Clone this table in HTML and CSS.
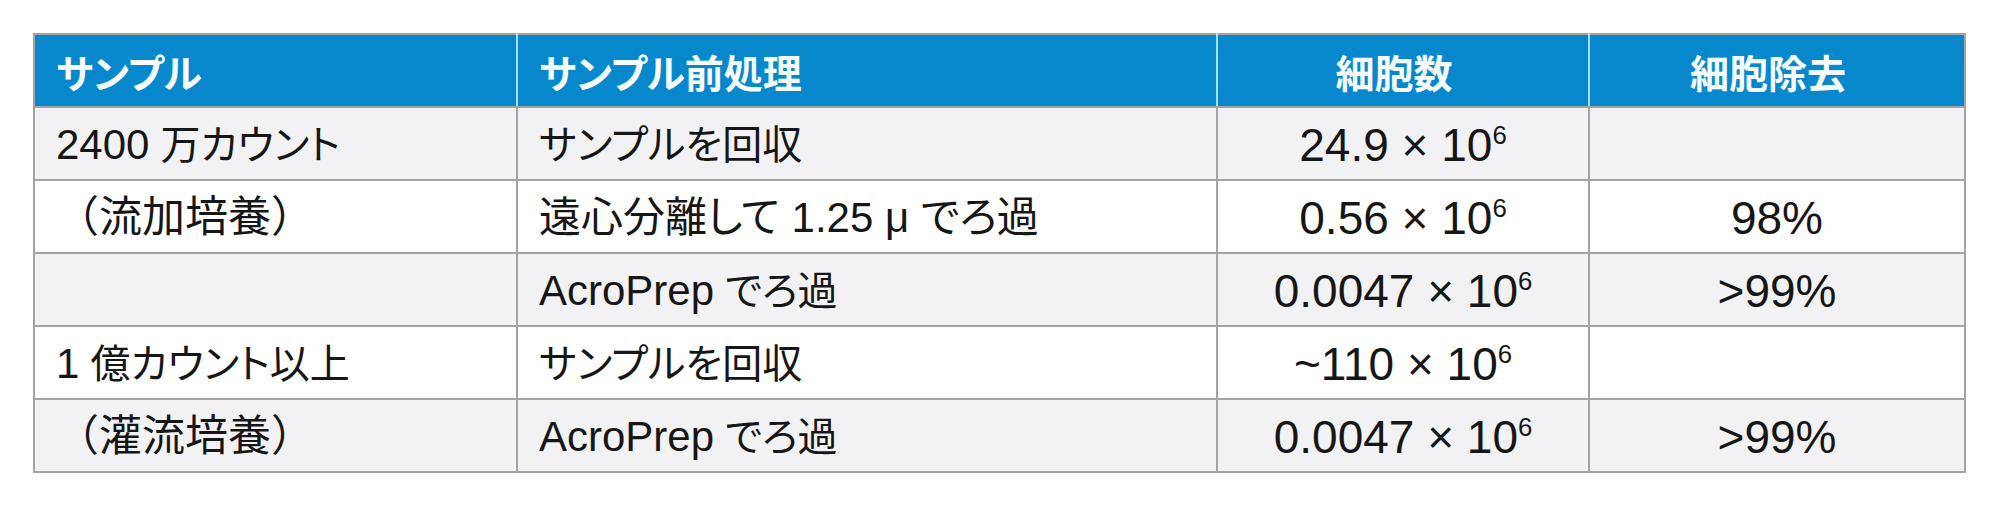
FILE: index.html
```html
<!DOCTYPE html>
<html lang="ja">
<head>
<meta charset="utf-8">
<title>細胞除去</title>
<link rel="stylesheet" href="styles.css">
</head>
<body>
<table class="t">
  <colgroup><col class="c1"><col class="c2"><col class="c3"><col class="c4"></colgroup>
  <thead>
    <tr>
      <th class="l first">サンプル</th>
      <th class="l">サンプル前処理</th>
      <th>細胞数</th>
      <th class="last">細胞除去</th>
    </tr>
  </thead>
  <tbody>
    <tr class="g">
      <td><span class="en">2400</span> 万カウント</td>
      <td>サンプルを回収</td>
      <td class="n">24.9 × 10<sup>6</sup></td>
      <td class="n"></td>
    </tr>
    <tr>
      <td class="p">（流加培養）</td>
      <td class="k">遠心分離して <span class="en">1.25 μ</span> でろ過</td>
      <td class="n">0.56 × 10<sup>6</sup></td>
      <td class="n">98%</td>
    </tr>
    <tr class="g">
      <td></td>
      <td><span class="en">AcroPrep</span> でろ過</td>
      <td class="n">0.0047 × 10<sup>6</sup></td>
      <td class="n">&gt;99%</td>
    </tr>
    <tr>
      <td><span class="en">1</span> 億カウント以上</td>
      <td>サンプルを回収</td>
      <td class="n">~110 × 10<sup>6</sup></td>
      <td class="n"></td>
    </tr>
    <tr class="g">
      <td class="p">（灌流培養）</td>
      <td><span class="en">AcroPrep</span> でろ過</td>
      <td class="n">0.0047 × 10<sup>6</sup></td>
      <td class="n">&gt;99%</td>
    </tr>
  </tbody>
</table>
</body>
</html>
```

FILE: styles.css
```css
html, body {
  margin: 0;
  padding: 0;
  background: #ffffff;
}

body {
  padding: 33px 0 0 33px;
  font-family: "Liberation Sans", "Noto Sans CJK JP", sans-serif;
  font-feature-settings: "palt";
  color: #161616;
}

.t {
  border-collapse: collapse;
  table-layout: fixed;
  width: 1931px;
}

.c1 { width: 483px; }
.c2 { width: 700px; }
.c3 { width: 372px; }
.c4 { width: 376px; }

.t tr {
  height: 73px;
}

.t th {
  background: #0888cc;
  color: #f6fcff;
  font-size: 39px;
  font-weight: 700;
  text-align: center;
  padding: 0 30px 0 12px;
  border-top: 2px solid #a4a4a4;
  border-bottom: 2px solid #a4a4a4;
  border-left: 2px solid #a6e2f5;
  border-right: 2px solid #a6e2f5;
  vertical-align: middle;
}

.t th.l {
  text-align: left;
  padding: 0 21px;
}

.t th.first {
  border-left-color: #a4a4a4;
}

.t th.last {
  border-right-color: #a4a4a4;
}

.t td {
  font-size: 40px;
  padding: 2px 21px 0 21px;
  border: 2px solid #a4a4a4;
  background: #ffffff;
  vertical-align: middle;
  white-space: nowrap;
  line-height: 1;
}

.t tr.g td {
  background: #f2f2f4;
}

.t .en {
  font-size: 42px;
}

.t td.k {
  font-size: 42px;
}

.t td.n {
  text-align: center;
  font-size: 46px;
}

.t td.p {
  font-size: 43px;
  font-feature-settings: normal;
}

.t sup {
  font-size: 0.56em;
  vertical-align: 0.66em;
  line-height: 0;
}
```
